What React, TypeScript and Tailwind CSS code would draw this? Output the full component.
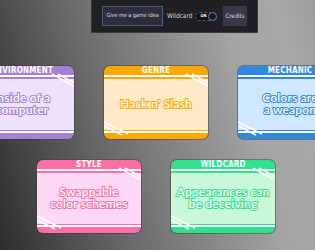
import React from "react";

type Card = {
  title: string;
  lines: string[];
  band: string;
  body: string;
  stroke: string;
};

const cards: Card[] = [
  { title: "ENVIRONMENT", lines: ["Inside of a", "computer"], band: "bg-[#a680d6]", body: "bg-[#ede2ff]", stroke: "[-webkit-text-stroke:2px_#a680d6]" },
  { title: "GENRE", lines: ["Hack n' Slash"], band: "bg-[#ffa800]", body: "bg-[#ffeac8]", stroke: "[-webkit-text-stroke:2px_#ffa800]" },
  { title: "MECHANIC", lines: ["Colors are", "a weapon"], band: "bg-[#2f88e2]", body: "bg-[#cfe7ff]", stroke: "[-webkit-text-stroke:2px_#2f88e2]" },
  { title: "STYLE", lines: ["Swappable", "color schemes"], band: "bg-[#ff6fa6]", body: "bg-[#ffd8f8]", stroke: "[-webkit-text-stroke:2px_#ff6fa6]" },
  { title: "WILDCARD", lines: ["Appearances can", "be deceiving"], band: "bg-[#2fe290]", body: "bg-[#c9f8d9]", stroke: "[-webkit-text-stroke:2px_#2fe290]" },
];

function IdeaCard({ card }: { card: Card }) {
  return (
    <div className={`relative w-[104px] h-[73px] shrink-0 rounded-[6px] overflow-hidden flex flex-col ${card.band} shadow-[0_0_0_1px_rgba(60,60,70,0.5)]`}>
      <div className="h-[8px] flex items-center justify-center text-white font-bold text-[8px] leading-none tracking-[0.2px] font-['DejaVu_Sans_Condensed','DejaVu_Sans',sans-serif] pt-[1px]">
        {card.title}
      </div>
      <div className="h-[2px] bg-white mt-[1px]" />
      <div className="h-[1px]" />
      <div className={`flex-1 mt-[1px] ${card.body} flex flex-col items-center justify-center pb-[1px]`}>
        {card.lines.map((l) => (
          <div
            key={l}
            className={`text-white text-[12px] leading-[12px] font-semibold tracking-[0.2px] whitespace-nowrap font-['Lato',sans-serif] ${card.stroke} [paint-order:stroke_fill]`}
          >
            {l}
          </div>
        ))}
      </div>
      <div className="h-[2px] mt-[1px] bg-white" />
      <div className="h-[5px] mt-[1px]" />
      <svg className="absolute inset-0" width="104" height="73" viewBox="0 0 104 73">
        <line x1="82" y1="8" x2="104" y2="20" stroke="white" strokeWidth="1.5" />
        <line x1="88" y1="8" x2="104" y2="16.5" stroke="white" strokeWidth="1.5" />
        <line x1="0" y1="56" x2="24" y2="68" stroke="white" strokeWidth="1.5" />
        <line x1="0" y1="60" x2="18" y2="69" stroke="white" strokeWidth="1.5" />
      </svg>
    </div>
  );
}

export default function App() {
  return (
    <div className="w-[315px] h-[250px] overflow-hidden bg-[linear-gradient(75deg,#2e2e2e_0%,#6a6a6a_35%,#a4a4a4_75%,#a8a8a8_90%,#9c9c9c_100%)] flex flex-col">
      <div className="ml-[91px] w-[167px] h-[33px] bg-[#1f1f24] border-x border-b border-[#3a3a3e] flex items-center pl-[10px] pr-[10px] font-['DejaVu_Sans_Condensed','DejaVu_Sans',sans-serif]">
        <button className="w-[61px] h-[20px] shrink-0 bg-[#2e2e3a] border border-[#4c5c80] text-[#dcdce4] text-[5.6px] tracking-[-0.1px] leading-none whitespace-nowrap px-0">
          Give me a game idea
        </button>
        <span className="ml-[4px] text-[#d8d8dc] text-[6.5px] leading-none whitespace-nowrap">Wildcard</span>
        <div className="ml-[3px] w-[22px] h-[9px] shrink-0 rounded-full bg-[#141418] border border-dashed border-[#55555c] flex items-center pl-[4px] justify-between">
          <span className="text-white text-[4px] font-bold leading-none">ON</span>
          <span className="w-[9px] h-[9px] -mr-[1px] rounded-full border border-[#5b7fc4] bg-[#1a1a22]" />
        </div>
        <button className="ml-auto w-[24px] h-[20px] shrink-0 bg-[#3a3a46] text-[#dcdce4] text-[6px] leading-none px-0">
          Credits
        </button>
      </div>
      <div className="mt-[33px] flex justify-center gap-[30px] pr-[3px]">
        {cards.slice(0, 3).map((c) => (
          <IdeaCard key={c.title} card={c} />
        ))}
      </div>
      <div className="mt-[21px] flex justify-center gap-[30px] pr-[3px]">
        {cards.slice(3).map((c) => (
          <IdeaCard key={c.title} card={c} />
        ))}
      </div>
    </div>
  );
}
